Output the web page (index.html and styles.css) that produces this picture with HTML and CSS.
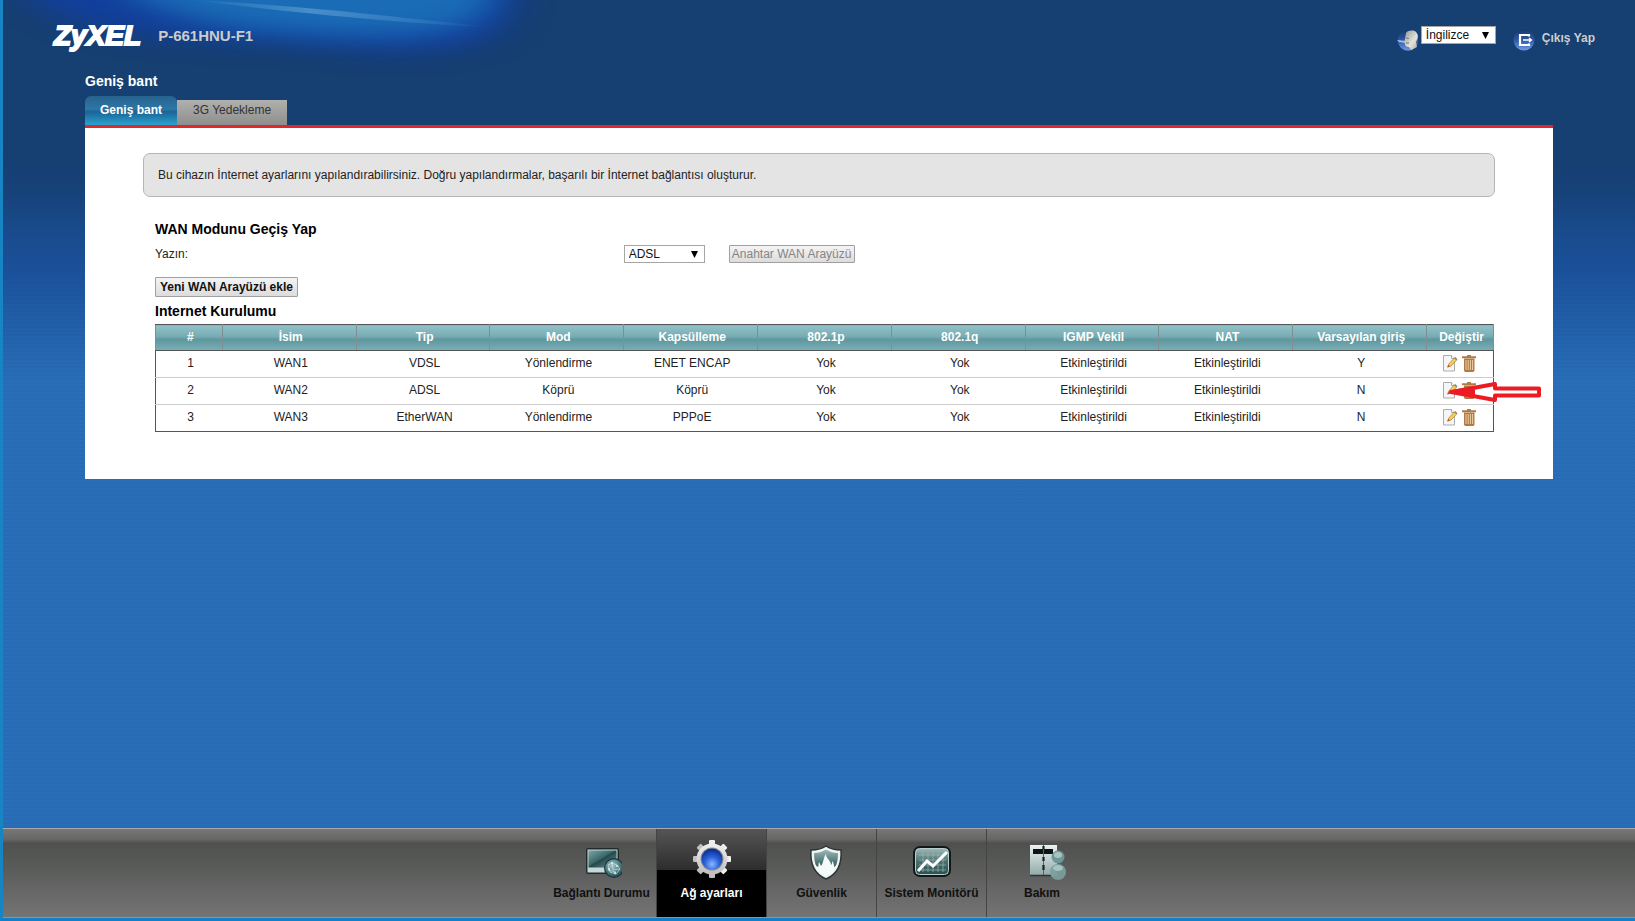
FILE: index.html
```html
<!DOCTYPE html>
<html lang="tr">
<head>
<meta charset="utf-8">
<title>ZyXEL P-661HNU-F1</title>
<link rel="stylesheet" href="styles.css">
</head>
<body>
<svg width="0" height="0" class="defs" aria-hidden="true">
  <defs>
    <linearGradient id="ball" x1="0" y1="0" x2="0" y2="1"><stop offset="0" stop-color="#17386f"/><stop offset=".5" stop-color="#2f58a4"/><stop offset="1" stop-color="#6c9be6"/></linearGradient>
    <linearGradient id="face" x1="0" y1="0" x2="1" y2="1"><stop offset="0" stop-color="#8f9494"/><stop offset=".6" stop-color="#e4e4dc"/><stop offset="1" stop-color="#a5a59c"/></linearGradient>
    <linearGradient id="teal" x1="0" y1="0" x2="1" y2="1"><stop offset="0" stop-color="#7fa5a5"/><stop offset=".45" stop-color="#3b6769"/><stop offset=".5" stop-color="#24494c"/><stop offset="1" stop-color="#6f9a9a"/></linearGradient>
    <linearGradient id="glass" x1="0" y1="0" x2="0" y2="1"><stop offset="0" stop-color="#9dbab8"/><stop offset=".5" stop-color="#4a7070"/><stop offset="1" stop-color="#2c5050"/></linearGradient>
    <linearGradient id="metal" x1="0" y1="0" x2="0" y2="1"><stop offset="0" stop-color="#f0f0f0"/><stop offset="1" stop-color="#bdbdbd"/></linearGradient>
    <linearGradient id="cabinet" x1="0" y1="0" x2="0" y2="1"><stop offset="0" stop-color="#eaf2f1"/><stop offset="1" stop-color="#8ea8a7"/></linearGradient>
    <radialGradient id="blue" cx=".5" cy=".75" r=".7"><stop offset="0" stop-color="#8ab8ff"/><stop offset=".5" stop-color="#2c62d8"/><stop offset="1" stop-color="#0b2f97"/></radialGradient>
    <radialGradient id="globe" cx=".4" cy=".35" r=".7"><stop offset="0" stop-color="#a8cbcc"/><stop offset=".6" stop-color="#4b7f84"/><stop offset="1" stop-color="#1f4a50"/></radialGradient>
    <linearGradient id="streak" x1="0" y1="0" x2="1" y2="0"><stop offset="0" stop-color="#7fb8e0" stop-opacity="0"/><stop offset=".4" stop-color="#7fb8e0" stop-opacity=".45"/><stop offset="1" stop-color="#7fb8e0" stop-opacity="0"/></linearGradient>
    <filter id="soft" x="-20%" y="-60%" width="140%" height="220%" color-interpolation-filters="sRGB"><feGaussianBlur stdDeviation="18 11"/></filter>
    <symbol id="edit" viewBox="0 0 16 17">
      <path d="M1.500.500h8l3 3v12.500h-11z" fill="#f4f5f6" stroke="#a9adb0"/>
      <path d="M9.500.500v3h3" fill="#fff" stroke="#a9adb0"/>
      <path d="M5.800 12l1-3 5.400-6 2.300 2.200-5.500 5.800z" fill="#f6cf55" stroke="#a87a2c" stroke-width=".7"/>
      <path d="M12.200 3l1-1 2.300 2.200-1 1z" fill="#8c8078"/>
      <path d="M5.300 12.500l.9-2.700 1.700 1.600z" fill="#c9482c"/>
    </symbol>
    <symbol id="trash" viewBox="0 0 14 17">
      <path d="M0 1.200h5V0h4v1.200h5v2H0z" fill="#b07a49"/>
      <path d="M2 3.500h10.500v12l-1 1.500H3l-1-1.500z" fill="#b07a49"/>
      <path d="M4 5v10M6.200 5v10M8.400 5v10M10.600 5v10" stroke="#f0cfa4" stroke-width="1"/>
    </symbol>
  </defs>
</svg>
<div class="page">
  <header class="header">
    <svg class="glow" viewBox="0 0 560 80" aria-hidden="true">
      <path d="M-10-40H510V10C490 64 380 52 290 44 200 38 60 42 20-10z" fill="#123f9c" filter="url(#soft)"/>
      <path d="M120-40H490V0C470 40 380 38 290 32 220 28 160 14 120-10z" fill="#1a6cb6" filter="url(#soft)"/>
      <path d="M185 0C290 4 400 18 490 27 400 24 290 12 185 0z" fill="url(#streak)"/>
    </svg>
    <a class="logo" href="#">ZyXEL</a>
    <span class="model">P-661HNU-F1</span>
    <div class="tools">
      <svg class="ball" viewBox="0 0 22 22" aria-hidden="true"><circle cx="11" cy="11.500" r="10.200" fill="url(#ball)"/><path d="M0 11l9 1v2l-7-1z" fill="#9cc2ee"/><path d="M9 4c2-3 8-3 10-1 3 3 2 7 0 10l1 5-6 3-2-3c-3 0-4-1-4-3l-1-2 1-3z" fill="url(#face)"/><path d="M9 9l3 .5M9 14h3" stroke="#777" fill="none"/></svg>
      <select class="select language" aria-label="Dil"><option>İngilizce</option></select>
      <a class="logout" href="#"><svg class="ball" viewBox="0 0 22 22" aria-hidden="true"><circle cx="11" cy="11" r="10.500" fill="url(#ball)"/><path d="M16 7.500V6H7v10h9v-1.500" fill="none" stroke="#fff" stroke-width="2.200"/><path d="M10 11h8M16 9l2.500 2-2.500 2" fill="none" stroke="#fff" stroke-width="1.300"/></svg>Çıkış Yap</a>
    </div>
  </header>
  <main class="main">
    <h1 class="title">Geniş bant</h1>
    <nav class="tabs"><a class="tab tab-active" href="#">Geniş bant</a><a class="tab" href="#">3G Yedekleme</a></nav>
    <section class="panel">
      <p class="info">Bu cihazın İnternet ayarlarını yapılandırabilirsiniz. Doğru yapılandırmalar, başarılı bir İnternet bağlantısı oluşturur.</p>
      <div class="body">
        <h2 class="heading">WAN Modunu Geçiş Yap</h2>
        <div class="row">
          <label class="label" for="type">Yazın:</label>
          <select class="select type" id="type"><option>ADSL</option></select>
          <button class="button button-switch" disabled>Anahtar WAN Arayüzü</button>
        </div>
        <button class="button button-add">Yeni WAN Arayüzü ekle</button>
        <h2 class="heading">Internet Kurulumu</h2>
        <table class="table">
          <thead><tr><th class="narrow">#</th><th>İsim</th><th>Tip</th><th>Mod</th><th>Kapsülleme</th><th>802.1p</th><th>802.1q</th><th>IGMP Vekil</th><th>NAT</th><th>Varsayılan giriş</th><th class="narrow">Değiştir</th></tr></thead>
          <tbody>
            <tr><td>1</td><td>WAN1</td><td>VDSL</td><td>Yönlendirme</td><td>ENET ENCAP</td><td>Yok</td><td>Yok</td><td>Etkinleştirildi</td><td>Etkinleştirildi</td><td>Y</td><td><div class="actions"><button aria-label="Düzenle"><svg width="16" height="17"><use href="#edit"/></svg></button><button aria-label="Sil"><svg width="14" height="17"><use href="#trash"/></svg></button></div></td></tr>
            <tr><td>2</td><td>WAN2</td><td>ADSL</td><td>Köprü</td><td>Köprü</td><td>Yok</td><td>Yok</td><td>Etkinleştirildi</td><td>Etkinleştirildi</td><td>N</td><td><div class="actions"><button aria-label="Düzenle"><svg width="16" height="17"><use href="#edit"/></svg></button><button aria-label="Sil"><svg width="14" height="17"><use href="#trash"/></svg></button>
              <svg class="arrow" viewBox="0 0 96 20" aria-hidden="true"><path d="M4 10L48 2v4.500h44v7H48V18z" fill="#fff" stroke="#ed1c24" stroke-width="4" stroke-linejoin="round"/><path d="M2 10l26-5.500v11z" fill="#ed1c24"/></svg></div></td></tr>
            <tr><td>3</td><td>WAN3</td><td>EtherWAN</td><td>Yönlendirme</td><td>PPPoE</td><td>Yok</td><td>Yok</td><td>Etkinleştirildi</td><td>Etkinleştirildi</td><td>N</td><td><div class="actions"><button aria-label="Düzenle"><svg width="16" height="17"><use href="#edit"/></svg></button><button aria-label="Sil"><svg width="14" height="17"><use href="#trash"/></svg></button></div></td></tr>
          </tbody>
        </table>
      </div>
    </section>
  </main>
  <nav class="dock">
    <a class="item" href="#"><svg viewBox="0 0 40 40" aria-hidden="true"><rect x="4" y="8" width="33" height="26" rx="2" fill="#222b2b"/><rect x="5.500" y="9.500" width="30" height="23" fill="#c6d8d7"/><rect x="6.500" y="10.500" width="28" height="17" fill="url(#teal)"/><circle cx="32" cy="28" r="10" fill="#1d3437"/><circle cx="32" cy="28" r="8.800" fill="url(#globe)"/><path d="M26 25l4-2 5 2 3 4-4 5-6-2zM30 23l1 7 7-1M26 30l8 2" fill="none" stroke="#cfe3e3" stroke-width=".7"/><g fill="#e6f2f2"><circle cx="30" cy="23" r="1"/><circle cx="27" cy="29" r="1"/><circle cx="35" cy="26" r="1"/><circle cx="33" cy="33" r="1"/></g></svg>Bağlantı Durumu</a>
    <a class="item item-active" href="#"><svg viewBox="0 0 40 40" aria-hidden="true"><g fill="url(#metal)"><rect x="17" y="0" width="6" height="38" rx="1"/><rect x="17" y="0" width="6" height="38" rx="1" transform="rotate(45 20 19)"/><rect x="17" y="0" width="6" height="38" rx="1" transform="rotate(90 20 19)"/><rect x="17" y="0" width="6" height="38" rx="1" transform="rotate(135 20 19)"/></g><circle cx="20" cy="19" r="15.500" fill="url(#metal)"/><circle cx="20" cy="19" r="11.500" fill="#8c8c8c"/><circle cx="20" cy="19" r="10.500" fill="url(#blue)"/></svg>Ağ ayarları</a>
    <a class="item" href="#"><svg class="shifted" viewBox="0 0 40 40" aria-hidden="true"><path d="M20 6c4 3 9 4 15 4 1 14-3 24-15 29C8 34 4 24 5 10c6 0 11-1 15-4z" fill="#f0f5f4" stroke="#2b3535" stroke-width="1.500"/><path d="M20 9.500c4 2.500 8 3.500 12 3.500 0 11-3 19-12 23.500C11 32 8 24 8 13c4 0 8-1 12-3.500z" fill="url(#glass)"/><path d="M20 37c-6-3-9-7-11-12l3 2c1-1 0-3 1-5l2 4c3-4 2-8 5-12 0 5 5 6 5 11 1-1 1-2 1-4 2 2 2 4 2 6l3-2c-2 5-5 9-11 12z" fill="#f4faf9"/></svg>Güvenlik</a>
    <a class="item" href="#"><svg viewBox="0 0 40 40" aria-hidden="true"><rect x="1" y="6" width="38" height="31" rx="7" fill="#101818"/><rect x="3.500" y="8.500" width="33" height="26" rx="4" fill="url(#glass)" stroke="#b9cdca" stroke-width="1"/><path d="M7 15h27M7 20h27M7 25h27M7 30h27M11 12v20M16 12v20M21 12v20M26 12v20M31 12v20" stroke="#a5c1bf" stroke-width=".6"/><path d="M6 31l9-10 6 5L35 12" fill="none" stroke="#fff" stroke-width="3"/></svg>Sistem Monitörü</a>
    <a class="item" href="#"><svg class="shifted" viewBox="0 0 40 40" aria-hidden="true"><path d="M4 5h27v31H4z" fill="url(#cabinet)"/><path d="M7 9h20v5H7z" fill="#0d1414"/><path d="M17.500 5v31" stroke="#526766"/><path d="M17.500 6v3M17.500 17v4M17.500 25v5" stroke="#1a2424" stroke-width="2.200"/><path d="M4 35.500h21" stroke="#283535" stroke-width="1.500"/><ellipse cx="32" cy="32" rx="8" ry="8" fill="#7ba09f" fill-opacity=".9"/><circle cx="32" cy="17" r="6.500" fill="#6f9796"/><ellipse cx="32" cy="15" rx="4" ry="3" fill="#a5c5c3"/><ellipse cx="32" cy="28" rx="5" ry="3" fill="#a5c5c3"/></svg>Bakım</a>
  </nav>
</div>
</body>
</html>
```
FILE: styles.css
```css
* { box-sizing: border-box; }
body { margin: 0; font: 12px/16px "Liberation Sans", Arial, sans-serif; color: #222; }
a { color: inherit; text-decoration: none; }
button, select { font: inherit; }
.defs { position: absolute; }
.page {
  display: flex; flex-direction: column; min-height: 100vh;
  border-left: 3px solid #1784c4; border-bottom: 3px solid #1180c8;
  background:
    linear-gradient(#163f72 0, #163f72 120px, rgba(22, 63, 114, 0) 230px) no-repeat,
    repeating-linear-gradient(transparent 0 2px, rgba(10, 70, 150, .16) 3px, transparent 4px),
    linear-gradient(#163f72 0, #163f72 160px, #1b519a 270px, #2a6eb8 380px);
}
.header { position: relative; display: flex; align-items: flex-start; height: 70px; padding: 20px 40px 0 51px; color: #ccc; font-weight: bold; }
.glow { position: absolute; left: 0; top: 0; width: 560px; height: 80px; }
.logo { position: relative; color: #fff; font: italic bold 28px/32px "Liberation Sans", Arial, sans-serif; -webkit-text-stroke: 2px #fff; }
.model { position: relative; margin-left: 17px; font-size: 15px; line-height: 32px; }
.tools { display: flex; margin-left: auto; padding-top: 6px; gap: 2px; }
.ball { width: 22px; height: 22px; margin-top: 3px; }
.logout { display: flex; gap: 7px; margin-left: 15px; line-height: 24px; }
.select {
  appearance: none; height: 18px; margin: 0; padding: 0 4px; border: 1px solid #a5a5a5; border-radius: 0; color: #111;
  background: #fff url("data:image/svg+xml,%3Csvg xmlns='http://www.w3.org/2000/svg' width='7' height='7'%3E%3Cpath d='M0 0h7L3.500 7z'/%3E%3C/svg%3E") no-repeat right 6px center;
}
.language { width: 75px; font-weight: normal; line-height: 16px; }
.main { flex: 1; padding: 0 82px 40px; }
.title { margin: 0; font-size: 14px; line-height: 22px; color: #fff; }
.tabs { display: flex; align-items: flex-end; height: 33px; }
.tab { padding: 0 16px; height: 25px; line-height: 20px; color: #333; background: linear-gradient(#b0b0ae, #8e8e8c); }
.tab-active { height: 29px; padding: 4px 15px 0; border-radius: 6px 6px 0 0; color: #fff; font-weight: bold; background: linear-gradient(#27628f 0, #2d77a6 45%, #1b6498 55%, #2ba2cf 100%); }
.panel { border-top: 3px solid #e0282b; padding: 25px 58px 47px; background: #fff; }
.info { margin: 0; padding: 13px 14px; border: 1px solid #b5b5b5; border-radius: 7px; background: #e4e4e4; }
.body { padding: 21px 1px 0 12px; }
.heading { margin: 0; font-size: 14px; line-height: 22px; color: #000; }
.row { display: flex; align-items: center; height: 28px; }
.label { width: 35%; }
.type { width: 81px; margin-right: 24px; }
.button { padding: 0 1px; height: 18px; border: 1px solid #a0a0a0; border-radius: 1px; background: linear-gradient(#f4f4f4, #dcdcdc); color: #111; line-height: 16px; }
.button:disabled { color: #858585; }
.button-switch { min-width: 126px; }
.button-add { display: block; height: 20px; margin: 9px 0 3px; padding: 0 4px; font-weight: bold; }
.table { width: 100%; margin-top: 2px; table-layout: fixed; border-collapse: collapse; border: 1px solid #555; text-align: center; }
.table th { height: 26px; padding: 0 0 2px 3px; border: 1px solid #7f8f92; border-bottom-color: #555; border-top-color: #555; color: #fff; background: linear-gradient(#92c2cb 0, #77abb2 45%, #5f969d 55%, #7aafb6 100%); }
.table .narrow { width: 5%; }
.table td { height: 27px; padding: 0 0 2px 3px; border-bottom: 1px solid #ccc; }
.table tr:last-child td { border-bottom-color: #555; }
.actions { position: relative; display: flex; justify-content: center; gap: 4px; padding-right: 4px; }
.actions button { display: flex; padding: 0; border: 0; background: none; }
.arrow { position: absolute; left: 17px; top: 0; width: 96px; height: 20px; z-index: 1; }
.dock { display: flex; justify-content: center; height: 90px; padding-left: 6px; border-top: 1px solid #aaa; border-bottom: 1px solid #a09080; background: linear-gradient(#777 0, #686868 10px, #50514f 14px, #5a5c5a 40px, #747474 100%); }
.item { display: flex; flex-direction: column; align-items: center; width: 110px; padding-top: 11px; border-right: 1px solid #444; color: #111; font-weight: bold; white-space: nowrap; }
.item:last-child { border-right: 0; }
.item svg { width: 40px; height: 40px; margin-bottom: 5px; }
.item .shifted { margin-left: 8px; }
.item-active { color: #fff; background: linear-gradient(#555 0, #2d2d2d 41px, #000 41px); }
```
